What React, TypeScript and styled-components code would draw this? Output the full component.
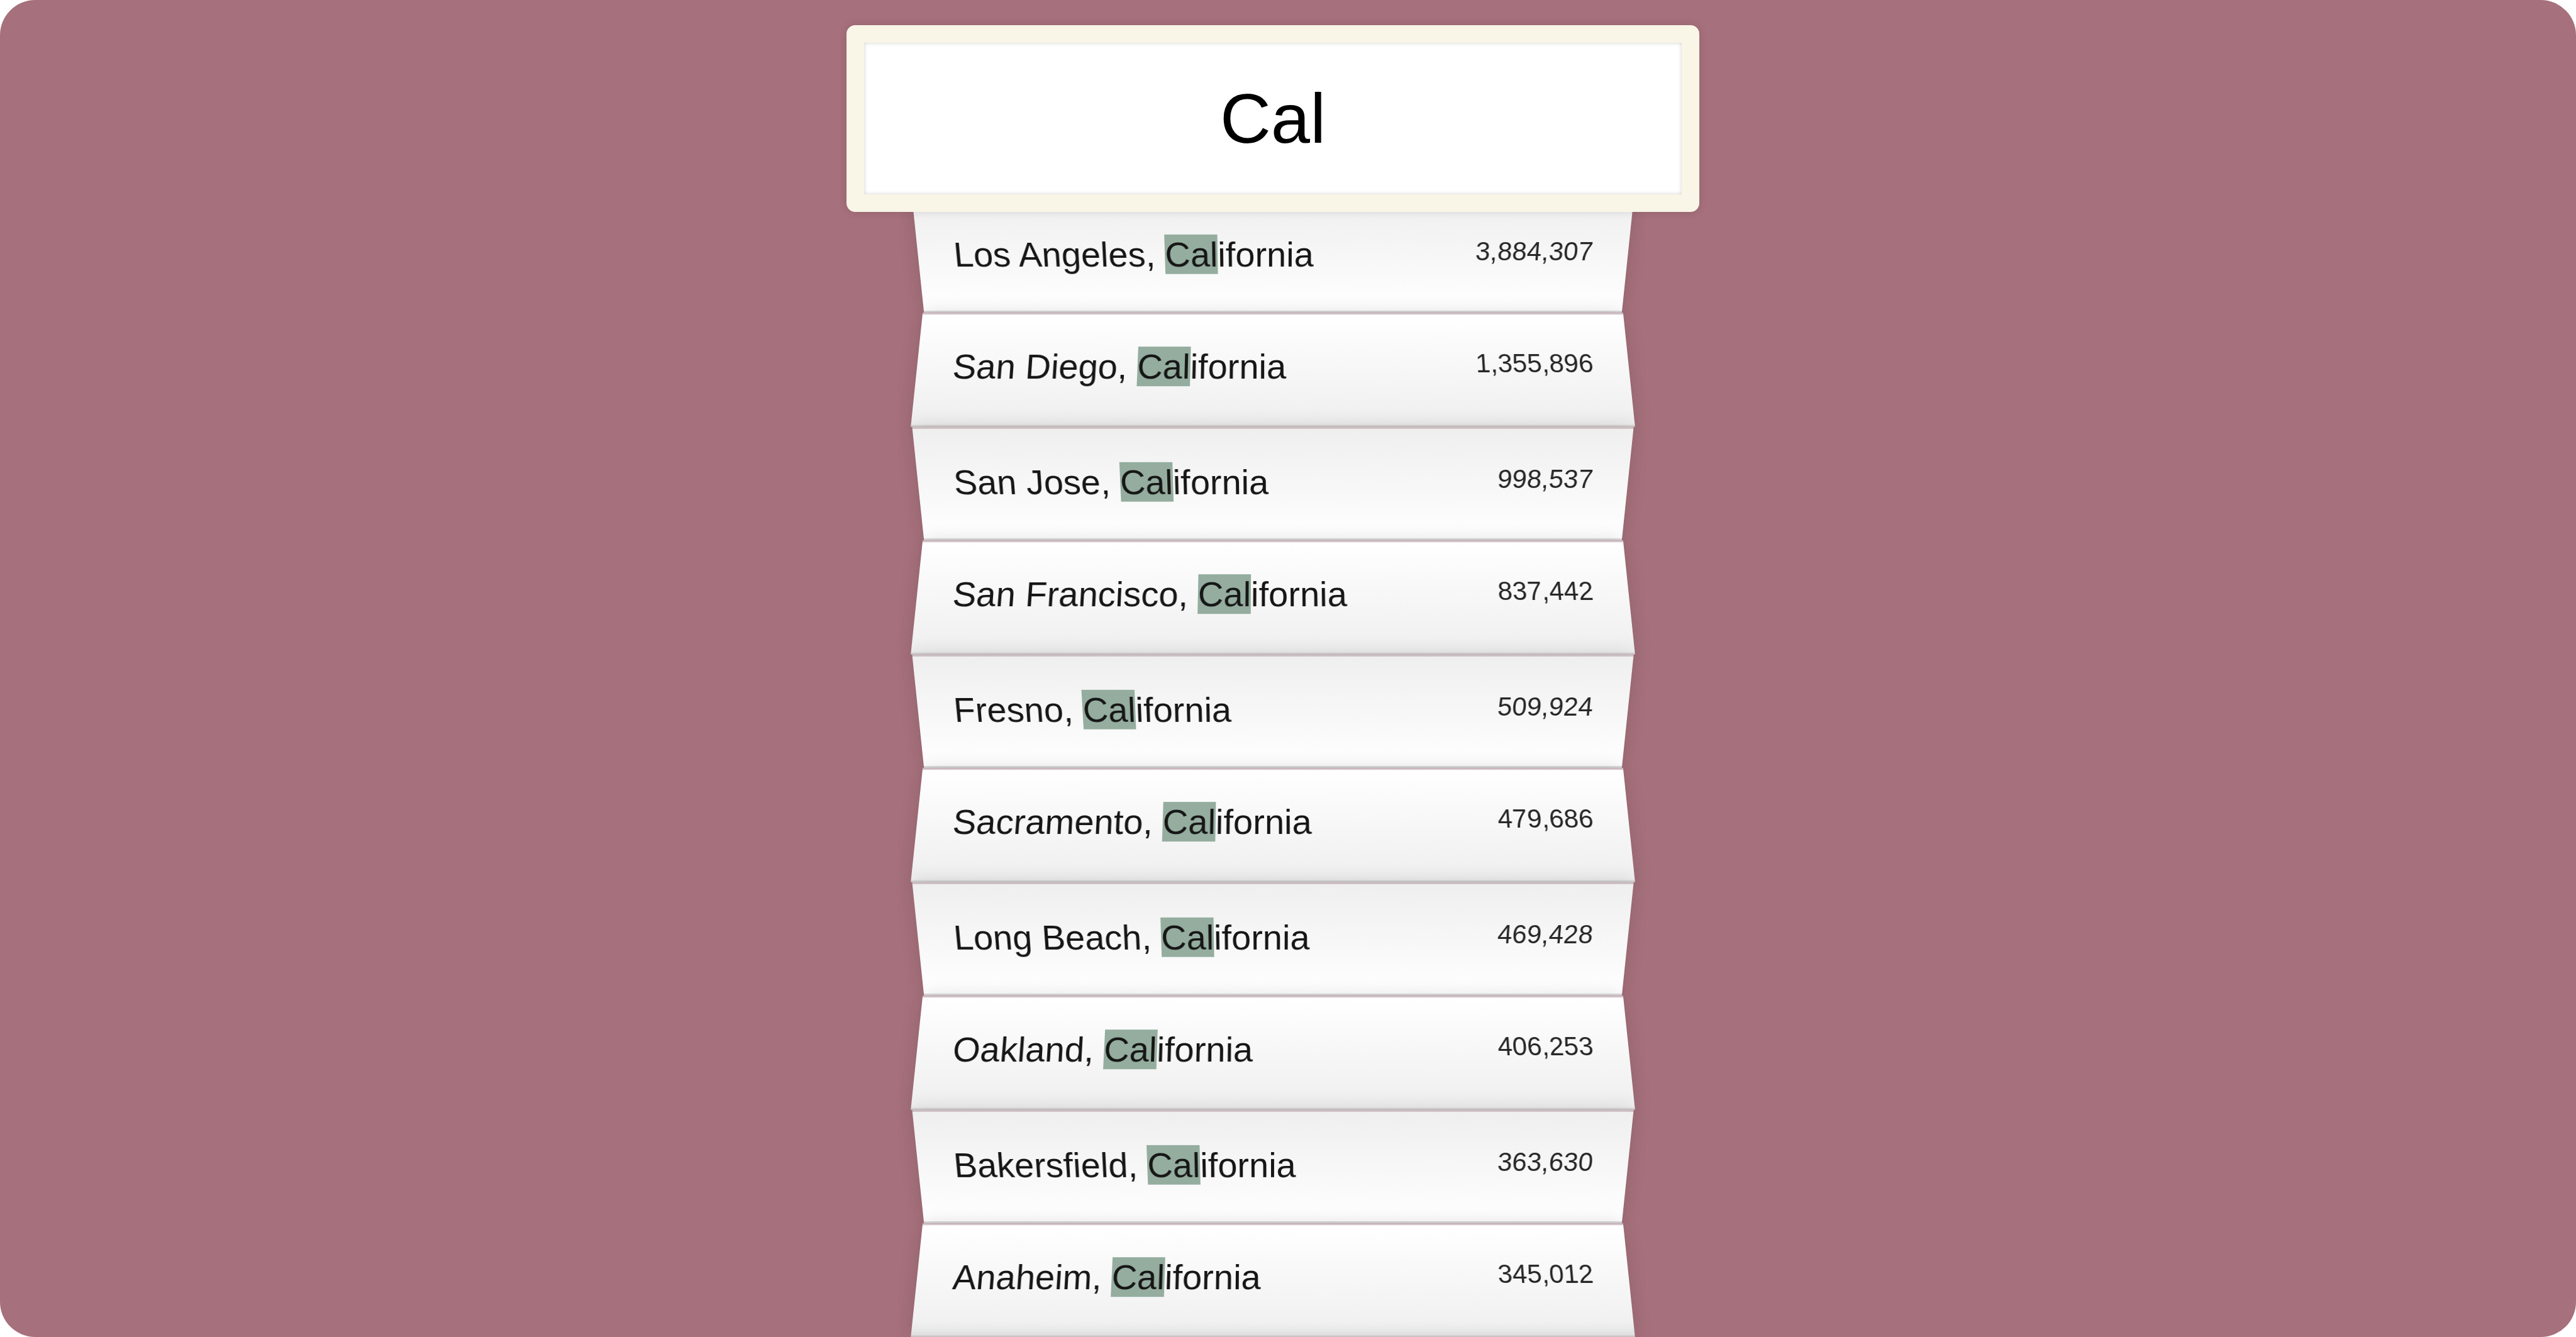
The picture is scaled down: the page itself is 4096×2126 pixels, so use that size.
import React, { useState } from 'react';
import styled, { createGlobalStyle } from 'styled-components';

const GlobalStyle = createGlobalStyle`
  *, *::before, *::after { box-sizing: border-box; }
  html { background: #ffffff; }
  body {
    margin: 0;
    font-family: "Liberation Sans", Arial, Helvetica, sans-serif;
    font-size: 56px;
    font-weight: 200;
    color: #161616;
  }
`;

const Page = styled.main`
  display: flex;
  justify-content: center;
  min-height: 100vh;
  padding: 40px 48px 0 0;
  overflow: hidden;
  border-radius: 56px;
  background: #a6707c;
`;

const SearchForm = styled.form`
  width: 1356px;
  max-width: 100%;
`;

const SearchInput = styled.input`
  display: block;
  position: relative;
  z-index: 2;
  width: 100%;
  height: 297px;
  margin: 0;
  padding: 56px;
  border: 28px solid #f9f5e7;
  border-radius: 14px;
  outline: 0;
  background: #ffffff;
  box-shadow: 0 0 14px rgba(0, 0, 0, 0.12), inset 0 0 6px rgba(0, 0, 0, 0.19);
  color: #000000;
  font-family: inherit;
  font-size: 112px;
  font-weight: inherit;
  text-align: center;
`;

const Suggestions = styled.ul`
  margin: -28px 113px 0;
  padding: 0;
  list-style: none;
`;

const Suggestion = styled.li`
  display: flex;
  justify-content: space-between;
  align-items: flex-start;
  padding: 54px 56px 61px 57px;
  border-top: 3px solid #d5c6ca;
  border-bottom: 3px solid #d8d8d8;
  box-shadow: 0 0 28px rgba(0, 0, 0, 0.14);

  &:nth-child(even) {
    transform: perspective(283px) rotateX(3deg) translateY(6px) scale(1.001);
    background: linear-gradient(to bottom, #ffffff 0%, #efefef 100%);
  }

  &:nth-child(odd) {
    border-top-color: #cdc0c3;
    transform: perspective(283px) rotateX(-3deg) translateY(9px);
    background: linear-gradient(to top, #ffffff 0%, #efefef 100%);
  }

  &:last-child {
    border-bottom-color: #cdc2c4;
    box-shadow: 0 0 28px rgba(0, 0, 0, 0.14), inset 0 -24px 24px -24px rgba(0, 0, 0, 0.14);
  }
`;

const PlaceName = styled.span`
  line-height: 60px;
`;

const Highlight = styled.mark`
  background: #94ad9f;
  color: inherit;
`;

const Population = styled.span`
  color: #262626;
  font-size: 42px;
  line-height: 50px;
`;

const places = [
  { city: 'Los Angeles', state: 'California', population: 3884307 },
  { city: 'San Diego', state: 'California', population: 1355896 },
  { city: 'San Jose', state: 'California', population: 998537 },
  { city: 'San Francisco', state: 'California', population: 837442 },
  { city: 'Fresno', state: 'California', population: 509924 },
  { city: 'Sacramento', state: 'California', population: 479686 },
  { city: 'Long Beach', state: 'California', population: 469428 },
  { city: 'Oakland', state: 'California', population: 406253 },
  { city: 'Bakersfield', state: 'California', population: 363630 },
  { city: 'Anaheim', state: 'California', population: 345012 },
];

function Marked({ text, query }: { text: string; query: string }) {
  const at = query ? text.toLowerCase().indexOf(query.toLowerCase()) : -1;
  if (at < 0) return <>{text}</>;
  return (
    <>
      {text.slice(0, at)}
      <Highlight>{text.slice(at, at + query.length)}</Highlight>
      {text.slice(at + query.length)}
    </>
  );
}

export default function App() {
  const [query, setQuery] = useState('Cal');
  const needle = query.toLowerCase();
  const matches = places.filter(
    (p) => p.city.toLowerCase().includes(needle) || p.state.toLowerCase().includes(needle),
  );

  return (
    <>
      <GlobalStyle />
      <Page>
        <SearchForm onSubmit={(e) => e.preventDefault()}>
          <SearchInput
            type="text"
            aria-label="City or State"
            value={query}
            onChange={(e) => setQuery(e.target.value)}
          />
          <Suggestions>
            {matches.map((p) => (
              <Suggestion key={p.city}>
                <PlaceName>
                  <Marked text={p.city} query={query} />
                  {', '}
                  <Marked text={p.state} query={query} />
                </PlaceName>
                <Population>{p.population.toLocaleString('en-US')}</Population>
              </Suggestion>
            ))}
          </Suggestions>
        </SearchForm>
      </Page>
    </>
  );
}
